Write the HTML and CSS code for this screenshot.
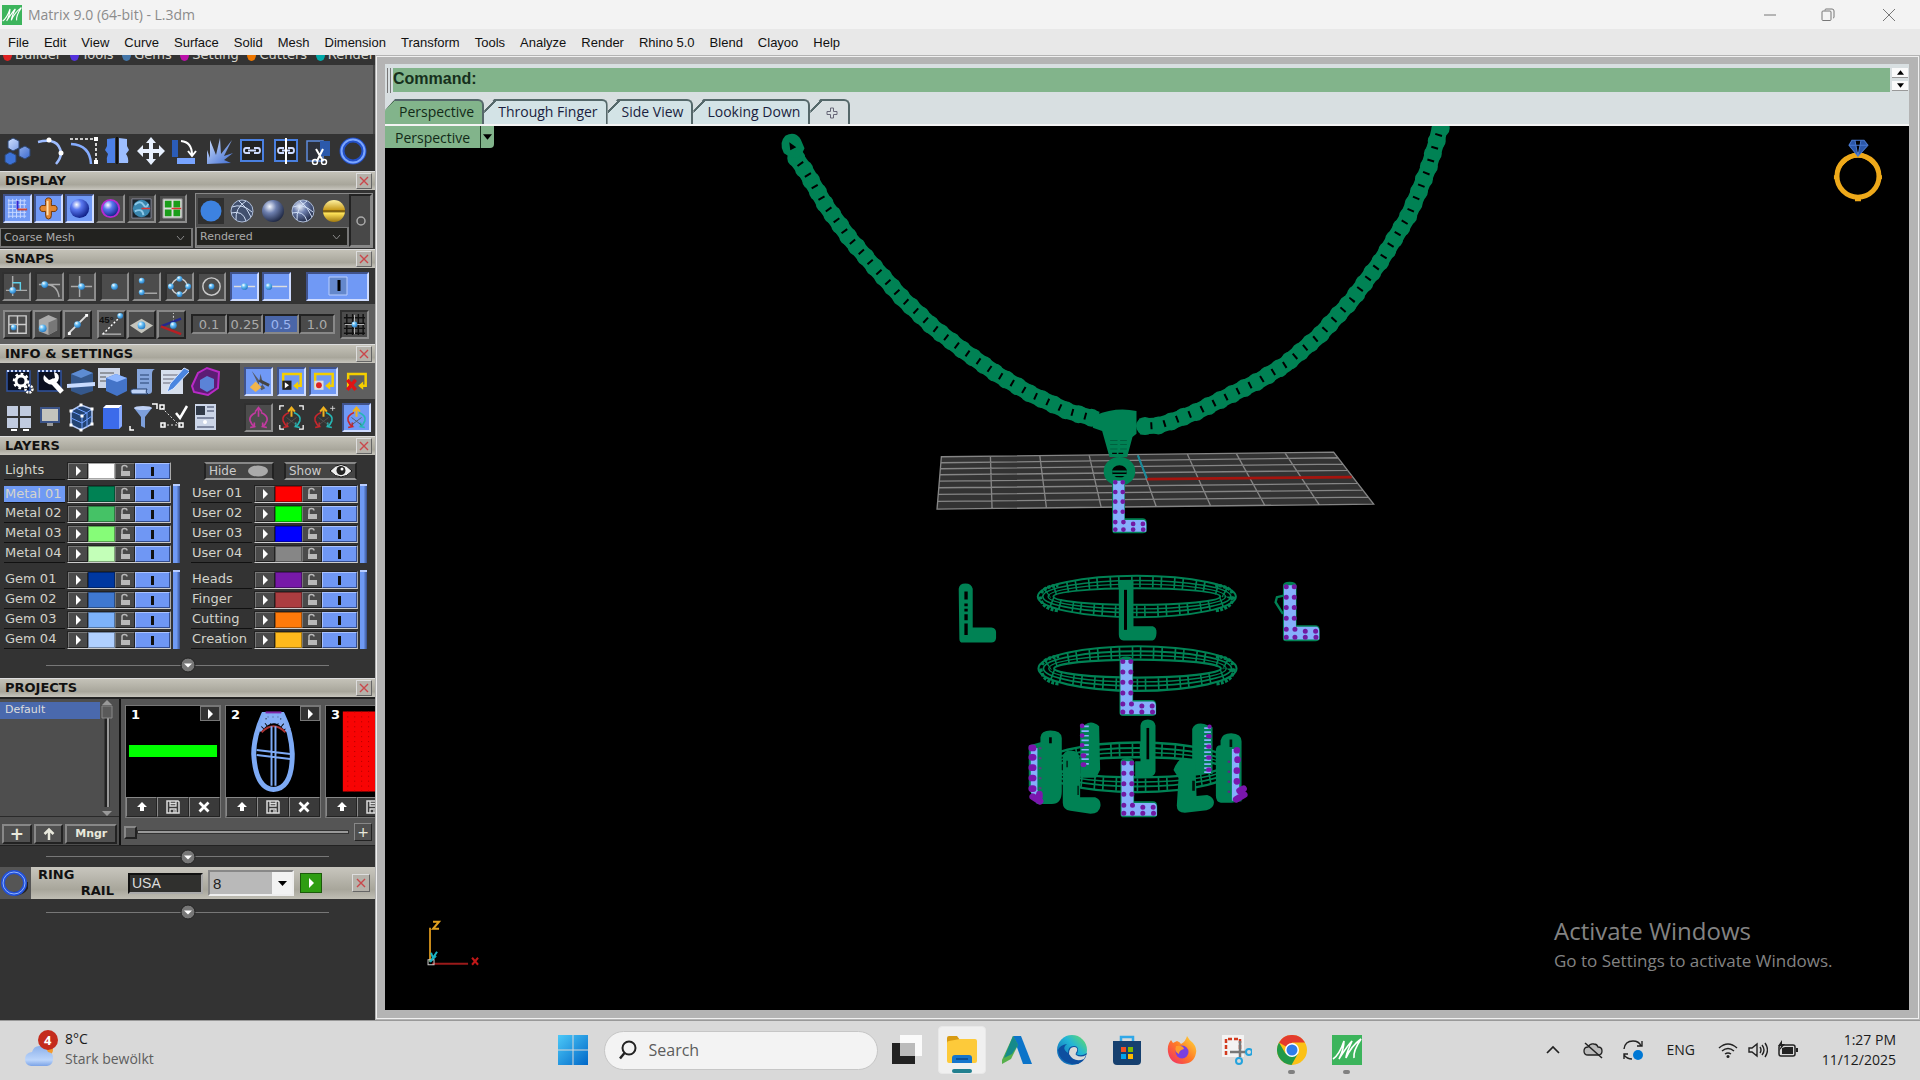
FILE: index.html
```html
<!DOCTYPE html>
<html lang="en">
<head>
<meta charset="utf-8">
<title>Matrix 9.0 (64-bit) - L.3dm</title>
<link rel="stylesheet" href="styles.css">
</head>
<body>
<svg class="defs" aria-hidden="true">
  <defs>
    <linearGradient id="blue" x1="0" y1="0" x2="1" y2="1"><stop offset="0" stop-color="#cfe0ff"/><stop offset="1" stop-color="#3c6ad0"/></linearGradient>
    <linearGradient id="win" x1="0" y1="0" x2="1" y2="1"><stop offset="0" stop-color="#4cc9f8"/><stop offset="1" stop-color="#0067c8"/></linearGradient>
    <linearGradient id="cloud" x1="0" y1="0" x2="0" y2="1"><stop offset="0" stop-color="#8bb0ea"/><stop offset=".7" stop-color="#bdd6fb"/><stop offset="1" stop-color="#7ba3e6"/></linearGradient>
    <linearGradient id="edge" x1="1" y1="0" x2="0" y2="1"><stop offset="0" stop-color="#6ee05a"/><stop offset=".4" stop-color="#22b6d6"/><stop offset="1" stop-color="#0b55b0"/></linearGradient>
    <linearGradient id="fire" x1="1" y1="0" x2="0" y2="1"><stop offset="0" stop-color="#ffe23c"/><stop offset=".5" stop-color="#ff7a26"/><stop offset="1" stop-color="#f0246e"/></linearGradient>
    <linearGradient id="gold" x1="0" y1="0" x2="0" y2="1"><stop offset="0" stop-color="#fff2a0"/><stop offset=".45" stop-color="#c89a1a"/><stop offset=".5" stop-color="#5a3d00"/><stop offset=".6" stop-color="#ffe45a"/><stop offset="1" stop-color="#a07810"/></linearGradient>
    <radialGradient id="sph" cx=".35" cy=".3" r=".75"><stop offset="0" stop-color="#ffffff"/><stop offset=".35" stop-color="#5a78f0"/><stop offset="1" stop-color="#0a1a80"/></radialGradient>
    <radialGradient id="steel" cx=".35" cy=".3" r=".75"><stop offset="0" stop-color="#f4f8ff"/><stop offset=".4" stop-color="#6d7fae"/><stop offset="1" stop-color="#1c2540"/></radialGradient>
    <radialGradient id="dotg" cx=".35" cy=".3" r=".8"><stop offset="0" stop-color="#fff"/><stop offset=".4" stop-color="#62bdf5"/><stop offset="1" stop-color="#1c6cb8"/></radialGradient>
    <symbol id="x" viewBox="0 0 14 14"><path d="M3 3l8 8M11 3l-8 8" stroke="#c9474b" stroke-width="1.4"/></symbol>
    <symbol id="lock" viewBox="0 0 14 14"><path d="M4 7V3.500q0-2 2.500-2t2.500 2" fill="none" stroke="#b9b9b9" stroke-width="1.500"/><path d="M3 7h9v5H3z" fill="#b9b9b9"/></symbol>
    <symbol id="play" viewBox="0 0 14 14"><path d="M5 2l5 5-5 5z" fill="#fff"/></symbol>
    <symbol id="up" viewBox="0 0 14 14"><path d="M7 2l5 5H9v4H5V7H2z" fill="#fff"/></symbol>
    <symbol id="disk" viewBox="0 0 14 14"><path d="M1 1h11l1 1v11H1z" fill="none" stroke="#ddd" stroke-width="1.500"/><path d="M4 1v5h6V1M4 3.500h6M4 13V9h6v4M8 10v3" fill="none" stroke="#ddd" stroke-width="1.300"/></symbol>
    <symbol id="del" viewBox="0 0 14 14"><path d="M2.500 2.500l9 9M11.500 2.500l-9 9" stroke="#fff" stroke-width="2.800"/></symbol>
    <symbol id="m" viewBox="0 0 30 30"><path d="M0 0h30v30H0z" fill="#3cb45c"/><path d="M1 24C7 20 10 12 12 6c0 6-2 12-5 18 4-6 8-13 13-18-2 5-6 12-6 17 3-7 8-14 15-19-4 6-8 13-7 19" fill="none" stroke="#fff" stroke-width="1.600"/></symbol>
    <symbol id="chain" viewBox="0 0 30 30"><path d="M4 5h22v21H4z" fill="#222" stroke="#4a80e0" stroke-width="2"/><path d="M13 13H9q-2 0-2 2.500t2 2.500h4M17 13h4q2 0 2 2.500t-2 2.500h-4M11 15.500h8" fill="none" stroke="#cfdcff" stroke-width="1.800"/></symbol>
    <symbol id="arrows" viewBox="0 0 30 30"><path d="M15 14V5M11 8l4-5 4 5" fill="none" stroke="#f0b21e" stroke-width="2.400"/><path d="M12 9Q3 13 5 19q2 5 5 7l-5 1m5-1V21" fill="none" stroke="#c8262c" stroke-width="2"/><path d="M18 9q9 4 7 10-2 5-5 7l5 1m-5-1V21" fill="none" stroke="#25b7b5" stroke-width="2"/><path d="M9 15l12 9M21 15L9 24" stroke="#555" stroke-width="1"/></symbol>
    <symbol id="cmd" viewBox="0 0 30 30"><path d="M12 21H5V6h21v14h-5" fill="none" stroke="#f4ce00" stroke-width="3"/><path d="M23 15l-6 5 6 5z" fill="#f4ce00"/></symbol>
    <symbol id="term" viewBox="0 0 30 30"><path d="M3 5h23v20H3z" fill="#0b1020" stroke="#3153a0" stroke-width="1.500"/><path d="M3 5h23" stroke="#c8d8ff" stroke-width="2" stroke-dasharray="2 2"/></symbol>
    <symbol id="knob" viewBox="0 0 16 16"><circle cx="8" cy="8" r="7" fill="#777" stroke="#222"/><path d="M4 6.500h8L8 10.500z" fill="#fff"/></symbol>
    <g id="gem">
      <path d="M0 6Q0-6 20-6t21 12V124h56q12 0 13 12v28q-2 8-12 8H10Q0 172 0 162z" fill="#008254"/>
      <path d="M3 4h36v125h62q8 2 8 14v24H3z" fill="#86affc"/>
      <g stroke="#7119a3" stroke-width="15" stroke-linecap="round"><path d="M10 9h0M34 9h0M10 40h0M34 40h0M10 71h0M34 71h0M10 103h0M34 103h0M10 136h0M36 136h0M10 160h0M36 160h0M67 142h0M98 142h0M67 160h0M99 160h0"/></g>
    </g>
    <g id="plain"><path d="M0 16Q2 0 20 0t22 16v116h56q14 2 14 14v18q-2 13-14 13H12Q2 177 2 166z" fill="#008254"/><path d="M22 24v24M22 60v8m0 8v8m0 8v18M22 120v34" stroke="#000" stroke-width="10"/></g>
    <g id="ring" fill="none" stroke="#008254"><ellipse rx="297" ry="62" stroke-width="6"/><ellipse rx="250" ry="25" stroke-width="6"/><ellipse rx="282" ry="48" stroke-width="5"/><ellipse rx="266" ry="37" stroke-width="4"/><ellipse rx="274" ry="44" stroke-width="32" stroke-dasharray="5 20 5 34"/><path d="M-290 0Q-285 38-235 42M290 0Q285 38 235 42M-286-10Q-280-30-235-34M286-10Q280-30 235-34" stroke-width="10" stroke-dasharray="9 4"/></g>
  </defs>
</svg>

<header class="title">
  <svg class="s20"><use href="#m"/></svg>
  <span class="title-text">Matrix 9.0 (64-bit) - L.3dm</span>
  <button aria-label="Minimize"><svg class="s16" viewBox="0 0 16 16"><path d="M2 8h12" stroke="#777"/></svg></button>
  <button aria-label="Restore"><svg class="s16" viewBox="0 0 16 16"><path d="M5 3.500V3q0-1 1-1h6q2 0 2 2v6q0 1-1 1" fill="none" stroke="#777"/><rect x="2" y="4" width="9" height="9.500" rx="1" fill="none" stroke="#777"/></svg></button>
  <button aria-label="Close"><svg class="s16" viewBox="0 0 16 16"><path d="M2 2l12 12M14 2L2 14" stroke="#777"/></svg></button>
</header>
<nav class="menu">
  <a href="#">File</a><a href="#">Edit</a><a href="#">View</a><a href="#">Curve</a><a href="#">Surface</a><a href="#">Solid</a><a href="#">Mesh</a><a href="#">Dimension</a><a href="#">Transform</a><a href="#">Tools</a><a href="#">Analyze</a><a href="#">Render</a><a href="#">Rhino 5.0</a><a href="#">Blend</a><a href="#">Clayoo</a><a href="#">Help</a>
</nav>

<main class="work">
<aside class="side">
  <div class="cats"><span><i class="red"></i>Builder</span><span><i class="violet"></i>Tools</span><span><i class="sky"></i>Gems</span><span><i class="pink"></i>Setting</span><span><i class="orange"></i>Cutters</span><span><i class="teal"></i>Render</span></div>
  <div class="blank"></div>
  <div class="tools">
    <svg class="s30" viewBox="0 0 30 30"><g fill="url(#blue)" stroke="#2d4672"><path d="M7 6l5-3 6 3v7l-6 3-5-3zM18 14l6-3 5 3v7l-5 3-6-3z"/><path d="M4 20l5-3 6 3v7l-6 3-5-3z" fill="#3d73d8"/></g></svg>
    <svg class="s30" viewBox="0 0 30 30"><path d="M3 7Q24 2 26 18q0 5-5 11" fill="none" stroke="#9dbcff" stroke-width="2.500"/><path d="M14 5h0M26 18h0" stroke="#fff" stroke-width="5" stroke-linecap="round"/></svg>
    <svg class="s30" viewBox="0 0 30 30"><path d="M2 4h26v24" fill="none" stroke="#fff" stroke-width="1.600" stroke-dasharray="3 2"/><path d="M28 4h0M28 27h0" stroke="#fff" stroke-width="4" stroke-linecap="square"/><path d="M3 9Q22 10 23 29" fill="none" stroke="#86adff" stroke-width="2.500"/></svg>
    <svg class="s30" viewBox="0 0 30 30"><path d="M13 3v25H5q-1-5 1-9l-3-4 2-4V4z" fill="#4c80e8"/><path d="M17 3v25h9q1-5-2-9l3-4-2-4V4z" fill="#9dbeff"/><path d="M15 2v27" stroke="#111" stroke-width="2"/></svg>
    <svg class="s30" viewBox="0 0 30 30"><path d="M15 2l5 6h-3v6h6v-4l6 6-6 6v-4h-6v6h3l-5 6-5-6h3v-6H7v4l-6-6 6-6v4h6V8h-3z" fill="#e8f1ff"/></svg>
    <svg class="s30" viewBox="0 0 30 30"><path d="M3 5h6v17H3z" fill="#2b5cb8"/><path d="M8 23h18v6H8z" fill="#78a4ff"/><path d="M12 6q11 1 11 14m-4-4l4 5 4-5" fill="none" stroke="#fff" stroke-width="2"/></svg>
    <svg class="s30" viewBox="0 0 30 30"><path d="M4 29L4 15l3 8 0-18 6 15 4-17 1 16L29 5l-8 16 9-3-9 7 7 3z" fill="url(#blue)"/></svg>
    <svg class="s30"><use href="#chain"/></svg>
    <svg class="s30" viewBox="0 0 30 30"><use href="#chain"/><path d="M15 3v26" stroke="#fff" stroke-width="2"/></svg>
    <svg class="s30" viewBox="0 0 30 30"><path d="M3 6h16v20H3z" fill="#2c303a" stroke="#5d8bdc" stroke-width="1.500"/><path d="M16 6h10v15H16z" fill="#2b59ab"/><path d="M12 14l7 12M19 14l-6 12" stroke="#fff" stroke-width="2"/><circle cx="11" cy="27" r="2.500" fill="none" stroke="#fff" stroke-width="1.500"/><circle cx="20" cy="27" r="2.500" fill="none" stroke="#fff" stroke-width="1.500"/></svg>
    <svg class="s30" viewBox="0 0 30 30"><circle cx="15" cy="16" r="11" fill="none" stroke="#2350c8" stroke-width="5"/><circle cx="15" cy="16" r="11.500" fill="none" stroke="#7ba6ff" stroke-width="2"/></svg>
  </div>

  <h2 class="head">DISPLAY<button aria-label="Close display"><svg class="s14"><use href="#x"/></svg></button></h2>
  <section class="display">
    <div class="disp-left">
      <div class="disp-btns">
        <button class="t on" aria-label="Grid"><svg class="s26" viewBox="0 0 26 26"><path d="M4 3v20M8 3v20M12 3v20M16 3v20M20 3v20M3 5h19M3 9h19M3 13h19M3 17h19M3 21h19" stroke="#c9d9ff"/><path d="M13 5v9" stroke="#32c" stroke-width="2"/><path d="M13 14h10" stroke="#c43" stroke-width="2"/></svg></button>
        <button class="t on" aria-label="Gumball"><svg class="s26" viewBox="0 0 26 26"><path d="M13 2q4 0 3 5v3q6-1 6 3t-6 3v4q0 4-3 4t-3-4v-4q-6 1-6-3t6-3V7q-1-5 3-5z" fill="#e18732" stroke="#6d3405"/><path d="M12 5v15" stroke="#ffe0b0" stroke-width="2"/></svg></button>
        <button class="t on" aria-label="Shade"><svg class="s26" viewBox="0 0 26 26"><circle cx="13" cy="13" r="10" fill="url(#sph)"/></svg></button>
        <button class="t" aria-label="Outline"><svg class="s26" viewBox="0 0 26 26"><circle cx="13" cy="13" r="9" fill="url(#sph)" stroke="#b62bd0" stroke-width="2"/></svg></button>
        <button class="t" aria-label="Environment"><svg class="s26" viewBox="0 0 26 26"><path d="M3 3h20v20H3z" fill="#1b242c" stroke="#889"/><circle cx="13" cy="13" r="9" fill="#3a87b0"/><path d="M6 9q6-5 9 0t5-1M6 16q8-4 9 4" fill="none" stroke="#8cc8e8" stroke-width="2"/><path d="M13 13h9" stroke="#d33" stroke-width="1.500"/></svg></button>
        <button class="t" aria-label="Viewports"><svg class="s26" viewBox="0 0 26 26"><path d="M3 3h20v20H3z" fill="#ddd" stroke="#888"/><path d="M5 5h7v7H5zM14 5h7v7h-7zM5 14h7v7H5zM14 14h7v7h-7z" fill="#1a9e1a"/><path d="M12 13h10" stroke="#d33" stroke-width="1.500"/></svg></button>
      </div>
      <select class="drop" aria-label="Mesh quality"><option>Coarse Mesh</option></select>
    </div>
    <div class="disp-right">
      <div class="modes">
        <div class="spheres">
          <svg class="s26" viewBox="0 0 26 26"><circle cx="13" cy="13" r="10.500" fill="#3d82e0"/></svg>
          <svg class="s26" viewBox="0 0 26 26"><circle cx="13" cy="13" r="11" fill="#41506e" stroke="#aebdd8"/><path d="M3 9q10-4 20 5M7 22Q6 10 17 3M2 15q12-3 15 8M10 3q8 6 12 16" fill="none" stroke="#d0def5"/></svg>
          <svg class="s26" viewBox="0 0 26 26"><circle cx="13" cy="13" r="11" fill="url(#steel)"/></svg>
          <svg class="s26" viewBox="0 0 26 26"><circle cx="13" cy="13" r="11" fill="url(#steel)" stroke="#aebdd8"/><path d="M3 9q10-4 20 5M7 22Q6 10 17 3M2 15q12-3 15 8M10 3q8 6 12 16" fill="none" stroke="#d0def5"/></svg>
          <svg class="s26" viewBox="0 0 26 26"><circle cx="13" cy="13" r="11" fill="url(#gold)"/></svg>
        </div>
        <select class="drop" aria-label="Display mode"><option>Rendered</option></select>
      </div>
      <button class="side-btn" aria-label="Options"><svg class="s14" viewBox="0 0 14 14"><circle cx="7" cy="7" r="4" fill="none" stroke="#aaa" stroke-width="1.500"/></svg></button>
    </div>
  </section>

  <h2 class="head">SNAPS<button aria-label="Close snaps"><svg class="s14"><use href="#x"/></svg></button></h2>
  <section class="snaps1">
    <div class="snap-row">
      <button class="t" aria-label="Perp"><svg class="s26" viewBox="0 0 26 26"><path d="M9 2v21M2 17h22" stroke="#aaa" stroke-width="1.500"/><path d="M9 9h8v8" fill="none" stroke="#5fd0e8" stroke-width="1.500"/><circle cx="9" cy="17" r="3.500" fill="url(#dotg)"/></svg></button>
      <button class="t" aria-label="Tan"><svg class="s26" viewBox="0 0 26 26"><path d="M2 11h22M9 11q12 0 14 13" fill="none" stroke="#aaa" stroke-width="1.500"/><circle cx="8" cy="11" r="3.500" fill="url(#dotg)"/></svg></button>
      <button class="t" aria-label="Intersection"><svg class="s26" viewBox="0 0 26 26"><path d="M11 2v22M2 13h22" stroke="#aaa" stroke-width="1.500"/><circle cx="13" cy="13" r="3.500" fill="url(#dotg)"/></svg></button>
      <button class="t" aria-label="Point"><svg class="s26" viewBox="0 0 26 26"><circle cx="13" cy="13" r="3.500" fill="url(#dotg)"/></svg></button>
      <button class="t" aria-label="Project"><svg class="s26" viewBox="0 0 26 26"><path d="M8 20h16" stroke="#aaa" stroke-width="1.500"/><circle cx="8" cy="7" r="3" fill="url(#dotg)"/><circle cx="8" cy="19" r="3" fill="url(#dotg)"/></svg></button>
      <button class="t" aria-label="Quad"><svg class="s26" viewBox="0 0 26 26"><circle cx="13" cy="13" r="8" fill="none" stroke="#ccc" stroke-width="1.500"/><g fill="url(#dotg)"><circle cx="13" cy="5" r="3"/><circle cx="13" cy="21" r="3"/><circle cx="4" cy="13" r="3"/><circle cx="22" cy="13" r="3"/></g></svg></button>
      <button class="t" aria-label="Center"><svg class="s26" viewBox="0 0 26 26"><circle cx="13" cy="13" r="9" fill="none" stroke="#ccc" stroke-width="1.500"/><circle cx="13" cy="13" r="3" fill="url(#dotg)"/></svg></button>
      <button class="t on" aria-label="Mid"><svg class="s26" viewBox="0 0 26 26"><path d="M2 13h22" stroke="#ddd" stroke-width="1.500"/><circle cx="13" cy="13" r="3.500" fill="url(#dotg)"/></svg></button>
      <button class="t on" aria-label="End"><svg class="s26" viewBox="0 0 26 26"><path d="M5 13h19" stroke="#ddd" stroke-width="1.500"/><circle cx="5" cy="13" r="3.500" fill="url(#dotg)"/></svg></button>
    </div>
    <button class="t on wide" aria-label="Snaps on"><svg class="s20" viewBox="0 0 20 20"><path d="M1 1h18v18H1z" fill="#6488cc" stroke="#b9ceff"/><path d="M11 4v11" stroke="#000" stroke-width="3"/></svg></button>
  </section>
  <section class="snaps2">
    <div class="trio">
      <button class="t" aria-label="Grid snap"><svg class="s26" viewBox="0 0 26 26"><path d="M4 4h18v18H4zM13 4v18M4 13h18" fill="none" stroke="#ccc" stroke-width="1.500"/><circle cx="9" cy="16" r="3" fill="url(#dotg)"/></svg></button>
      <button class="t" aria-label="Surface snap"><svg class="s26" viewBox="0 0 26 26"><path d="M4 8l10-5 9 4v12l-9 5-10-4z" fill="#aaa"/><path d="M14 11v13l9-5V7z" fill="#777"/><circle cx="8" cy="17" r="4" fill="url(#dotg)"/></svg></button>
      <button class="t" aria-label="Curve snap"><svg class="s26" viewBox="0 0 26 26"><path d="M4 22L22 4" stroke="#ddd" stroke-width="2"/><path d="M3 21h3v3H3zM21 2h3v3h-3z" fill="#fff"/><circle cx="13" cy="13" r="3.500" fill="url(#dotg)"/></svg></button>
    </div>
    <div class="trio">
      <button class="t" aria-label="45 degrees"><svg class="s26" viewBox="0 0 26 26"><text x="0" y="11" class="tiny">45°</text><path d="M4 23L21 6" stroke="#fff" stroke-width="1.500" stroke-dasharray="2 2"/><path d="M3 23h20" stroke="#ddd"/><circle cx="22" cy="4" r="3" fill="url(#dotg)"/></svg></button>
      <button class="t" aria-label="Planar"><svg class="s26" viewBox="0 0 26 26"><path d="M1 14l12-7 12 7-12 8z" fill="#c5c5bd"/><circle cx="13" cy="14" r="4" fill="url(#dotg)"/></svg></button>
      <button class="t" aria-label="Axis"><svg class="s26" viewBox="0 0 26 26"><path d="M15 14V1" stroke="#ddd" stroke-dasharray="2 2"/><path d="M2 15L23 7" stroke="#22288f" stroke-width="2.500"/><path d="M2 15l21 8" stroke="#b71f24" stroke-width="2.500"/><circle cx="15" cy="14" r="3.500" fill="url(#dotg)"/></svg></button>
    </div>
    <div class="nums"><button>0.1</button><button>0.25</button><button class="sel">0.5</button><button>1.0</button></div>
    <button class="t" aria-label="Snap to grid"><svg class="s26" viewBox="0 0 26 26"><path d="M5 2v22M11 2v22M17 2v22M22 2v22M2 6h22M2 12h22M2 17h22M2 22h22" stroke="#111" stroke-width="1.500"/><path d="M13 3v20M3 13h20" stroke="#bbb"/><circle cx="13" cy="13" r="3" fill="url(#dotg)"/></svg></button>
  </section>

  <h2 class="head">INFO &amp; SETTINGS<button aria-label="Close info"><svg class="s14"><use href="#x"/></svg></button></h2>
  <section class="info">
    <div class="info-l">
      <svg class="s30" viewBox="0 0 30 30"><use href="#term"/><circle cx="17" cy="15" r="5" fill="none" stroke="#fff" stroke-width="3"/><circle cx="17" cy="15" r="7" fill="none" stroke="#fff" stroke-width="2.500" stroke-dasharray="2.700 2.700"/><circle cx="25" cy="23" r="3.500" fill="none" stroke="#fff" stroke-width="2.500" stroke-dasharray="2 1"/></svg>
      <svg class="s30" viewBox="0 0 30 30"><use href="#term"/><path d="M16 14l11 12" stroke="#fff" stroke-width="5"/><path d="M9 9l5 5 6-2-1-6q7 2 4 9-6 6-11 2-5-2-3-8z" fill="#fff"/></svg>
      <svg class="s30" viewBox="0 0 30 30"><path d="M5 8l12-5 10 4v18l-12 4-10-4z" fill="#35588c"/><path d="M5 8l12-5 10 4-12 5z" fill="#5d8cd3"/><path d="M1 18l28-2v4L1 22z" fill="#c9dcff"/></svg>
      <svg class="s30" viewBox="0 0 30 30"><path d="M1 2h22v20H1z" fill="#cdd6e8"/><path d="M3 7h14M3 11h6M3 15h6" stroke="#555"/><path d="M9 12l10-4 11 4v13l-10 5-11-5z" fill="#4474c8"/><path d="M9 12l10-4 11 4-10 4z" fill="#8fb7ff"/></svg>
      <svg class="s30" viewBox="0 0 30 30"><path d="M9 3h18q-3 1-3 5v17q0 3-4 3H6q3-1 3-4z" fill="#86a6dd"/><path d="M4 28q-3-4 1-5h14q-2 4 1 5zM12 9h9M12 13h9M12 17h9" fill="#bed3f8" stroke="#24406f"/></svg>
      <svg class="s30" viewBox="0 0 30 30"><path d="M2 4h22v24H2z" fill="#d6deec"/><path d="M4 9h16M4 13h13M4 17h9" stroke="#667"/><path d="M25 2l6 3-17 18-6 3 3-8z" fill="#4b86e0" stroke="#dbe7ff"/></svg>
      <svg class="s30" viewBox="0 0 30 30"><path d="M2 20L8 7l9-5 12 4-1 16-10 7-14-3z" fill="#5c1d74" stroke="#b92ac6" stroke-width="2"/><path d="M10 14l7-4 7 3v9l-7 4-7-4z" fill="#5b83d7"/></svg>
    </div>
    <div class="info-r lite">
      <button class="t on" aria-label="Tools"><svg class="s26" viewBox="0 0 26 26"><path d="M6 2l14 18-4 2zM15 5l-2 14 5-3z" fill="#555a66"/><path d="M4 19l6-6 6 6-6 5z" fill="#f1b54c"/><path d="M14 12l10 5" stroke="#444" stroke-width="3"/></svg></button>
      <button class="t on" aria-label="Play history"><svg class="s26" viewBox="0 0 30 30"><use href="#cmd"/><path d="M4 14h11v11H4z" fill="#222"/><path d="M7 16l5 3.500-5 3.500z" fill="#fff"/></svg></button>
      <button class="t on" aria-label="Record history"><svg class="s26" viewBox="0 0 30 30"><use href="#cmd"/><path d="M4 14h11v11H4z" fill="#ddd"/><circle cx="9.500" cy="19.500" r="3.500" fill="#d22"/></svg></button>
      <button class="t flat" aria-label="Clear history"><svg class="s26" viewBox="0 0 30 30"><use href="#cmd"/><path d="M4 13l10 12M14 13L4 25" stroke="#e01414" stroke-width="4"/></svg></button>
    </div>
    <div class="info-l">
      <svg class="s30" viewBox="0 0 30 30"><path d="M3 4h11v10H3zM16 4h11v10H16zM3 16h11v10H3zM16 16h11v10H16z" fill="#c1cbdf"/><path d="M7 28h6M19 28h6" stroke="#fff" stroke-width="2"/></svg>
      <svg class="s30" viewBox="0 0 30 30"><path d="M6 6h18v14H6z" fill="#c4c4bd" stroke="#3c5488" stroke-width="2"/><path d="M12 21h6v3h-6z" fill="#999"/></svg>
      <svg class="s30" viewBox="0 0 30 30"><path d="M5 9l10-6 11 4v15l-11 6-10-5z" fill="#234373" stroke="#b8cdf8" stroke-width="1.500"/><path d="M5 9l11 5 10-7M16 14v14M10 6l11 5v14M5 16l11 5 10-7" fill="none" stroke="#6fa0ff"/><path d="M5 9h0M15 3h0M26 7h0M26 22h0M15 28h0M5 23h0M16 14h0" stroke="#fff" stroke-width="3" stroke-linecap="square"/></svg>
      <svg class="s30" viewBox="0 0 30 30"><path d="M6 6l3-3h16v21l-3 3H6z" fill="#3c6bea"/><path d="M6 6l3-3h16l-3 3z" fill="#fff"/><path d="M22 6l3-3v21l-3 3z" fill="#88aaff"/></svg>
      <svg class="s30" viewBox="0 0 30 30"><path d="M6 6h18l-7 9v11l-4-2v-9z" fill="#7d9fdb"/><ellipse cx="15" cy="6" rx="9" ry="2" fill="#bfd1f5"/><path d="M24 2h5v5M2 24v4h4" fill="none" stroke="#fff" stroke-width="1.500"/></svg>
      <svg class="s30" viewBox="0 0 30 30"><path d="M3 6l20 20M4 23h18" stroke="#ddd" stroke-dasharray="2 2"/><path d="M1 3h4v4H1zM2 21h4v4H2zM20 21h4v4h-4z" fill="none" stroke="#fff" stroke-width="1.500"/><path d="M17 11l4 5 7-12" fill="none" stroke="#fff" stroke-width="2.500"/></svg>
      <svg class="s30" viewBox="0 0 30 30"><path d="M5 2h21v26H5z" fill="#ccd6e8"/><path d="M6 4h9v9H6z" fill="#303947"/><path d="M17 5h7M17 9h7M7 16h17M7 25h17" stroke="#65708a" stroke-width="1.500"/><circle cx="15" cy="20" r="2" fill="#fff"/></svg>
    </div>
    <div class="info-r">
      <button class="t" aria-label="Orient"><svg class="s26" viewBox="0 0 30 30"><g class="magenta"><path d="M15 14V5M11 8l4-5 4 5M12 9Q3 13 5 19q2 5 5 7l-5 1m5-1V21M18 9q9 4 7 10-2 5-5 7l5 1m-5-1V21" fill="none" stroke-width="2"/></g></svg></button>
      <button class="t none" aria-label="Orient selection"><svg class="s26" viewBox="0 0 30 30"><use href="#arrows"/><path d="M1 6V1h5M24 1h5v5M1 24v5h5M24 29h5v-5" fill="none" stroke="#fff" stroke-width="1.500"/></svg></button>
      <button class="t none" aria-label="Orient add"><svg class="s26" viewBox="0 0 30 30"><use href="#arrows"/><path d="M26 1v6M23 4h6" stroke="#ddd"/></svg></button>
      <button class="t on" aria-label="Orient world"><svg class="s26" viewBox="0 0 30 30"><use href="#arrows"/></svg></button>
    </div>
  </section>

  <h2 class="head">LAYERS<button aria-label="Close layers"><svg class="s14"><use href="#x"/></svg></button></h2>
  <section class="layers">
    <div class="top-row">
      <div class="layer"><span class="name">Lights</span><div class="ctl"><button aria-label="Open"><svg class="s14"><use href="#play"/></svg></button><i class="sw" style="background:#fff"></i><button aria-label="Lock"><svg class="s14"><use href="#lock"/></svg></button><button class="tog" aria-label="On"></button></div></div>
      <button class="hs">Hide<svg class="eye" viewBox="0 0 22 14"><ellipse cx="11" cy="7" rx="10" ry="5.500" fill="#aaa"/></svg></button>
      <button class="hs">Show<svg class="eye" viewBox="0 0 22 14"><path d="M0 7q11-13 22 0-11 12-22 0z" fill="#eee" stroke="#111"/><circle cx="11" cy="6.500" r="4.500" fill="#222"/><circle cx="12" cy="5" r="1.500" fill="#fff"/></svg></button>
    </div>
    <div class="groups" id="groups"></div>
    <div class="pull"><svg class="s16"><use href="#knob"/></svg></div>
  </section>

  <h2 class="head">PROJECTS<button aria-label="Close projects"><svg class="s14"><use href="#x"/></svg></button></h2>
  <section class="projects">
    <div class="plist">
      <div class="plist-body"><div class="plist-items"><a href="#">Default</a></div><svg class="vbar" viewBox="0 0 14 118"><path d="M2 6l5-5 5 5z" fill="#999"/><path d="M7 8v100" stroke="#222" stroke-width="5"/><path d="M8 18v90" stroke="#999" stroke-width="2"/><path d="M2 7h10v12H2z" fill="#5a5a5a" stroke="#888"/><path d="M2 112h10l-5 5z" fill="#999"/></svg></div>
      <div class="plist-foot"><button class="b">+</button><button class="b" aria-label="Up"><svg class="s14" viewBox="0 0 14 14"><path d="M7 13V3M2.500 7L7 2.500 11.500 7" fill="none" stroke="#e8e8dc" stroke-width="2.500"/></svg></button><button class="b mngr">Mngr</button></div>
    </div>
    <div class="thumbs">
      <div class="strip">
        <div class="card"><div class="pic"><b>1</b><svg class="art" viewBox="0 0 95 90"><path d="M3 39h89v12H3z" fill="#0f0"/></svg><button aria-label="Load"><svg class="s14"><use href="#play"/></svg></button></div><div class="acts"><button aria-label="Up"><svg class="s14"><use href="#up"/></svg></button><button aria-label="Save"><svg class="s14"><use href="#disk"/></svg></button><button aria-label="Delete"><svg class="s14"><use href="#del"/></svg></button></div></div>
        <div class="card"><div class="pic"><b>2</b><svg class="art" viewBox="0 0 95 90"><path d="M38 8Q28 30 28 48q2 35 20 36 19-1 19-36Q66 26 57 8z" fill="none" stroke="#7daaf5" stroke-width="5"/><path d="M33 24q15-20 30 0M36 14h24M38 9h20" fill="none" stroke="#86aef5" stroke-width="6" stroke-dasharray="4 1"/><path d="M36 26q12-12 24 0" fill="none" stroke="#a33" stroke-width="2"/><path d="M46 20v60M50 20v60M31 44l34 4M31 49l34 4" stroke="#7daaf5" stroke-width="2"/><path d="M40 6h16" stroke="#8226a8" stroke-width="2"/></svg><button aria-label="Load"><svg class="s14"><use href="#play"/></svg></button></div><div class="acts"><button aria-label="Up"><svg class="s14"><use href="#up"/></svg></button><button aria-label="Save"><svg class="s14"><use href="#disk"/></svg></button><button aria-label="Delete"><svg class="s14"><use href="#del"/></svg></button></div></div>
        <div class="card"><div class="pic"><b>3</b><svg class="art" viewBox="0 0 95 90"><path d="M17 5h78v81H17z" fill="#f80404"/><path d="M22 5v81M29 5v81M36 5v81M43 5v81M50 5v81" stroke="#a00" stroke-dasharray="1 4"/></svg></div><div class="acts"><button aria-label="Up"><svg class="s14"><use href="#up"/></svg></button><button aria-label="Save"><svg class="s14"><use href="#disk"/></svg></button><button aria-label="Delete"><svg class="s14"><use href="#del"/></svg></button></div></div>
      </div>
      <div class="hbar"><i></i><span></span><button class="b">+</button></div>
    </div>
  </section>
  <div class="pull"><svg class="s16"><use href="#knob"/></svg></div>

  <section class="rail">
    <div class="rail-ic"><svg class="s28" viewBox="0 0 28 28"><path d="M13 25Q28 24 27 13" fill="none" stroke="#222" stroke-width="4"/><circle cx="14" cy="14" r="11" fill="none" stroke="#2250d8" stroke-width="4"/><circle cx="14" cy="14" r="11" fill="none" stroke="#8fb4ff" stroke-width="1"/></svg></div>
    <h2 class="rail-name"><span>RING</span><span class="second">RAIL</span></h2>
    <input class="usa" aria-label="Standard" value="USA">
    <select class="size" aria-label="Ring size"><option>8</option></select>
    <button class="go" aria-label="Run"><svg class="s14"><use href="#play"/></svg></button>
    <button class="rail-x" aria-label="Close ring rail"><svg class="s14"><use href="#x"/></svg></button>
  </section>
  <div class="pull last"><svg class="s16"><use href="#knob"/></svg></div>
</aside>

<section class="frame">
  <div class="cmd"><span class="grip"></span><label class="cmd-line"><span>Command:</span><input aria-label="Command"></label><div class="spin"><button aria-label="Scroll up"><svg class="tri" viewBox="0 0 8 5"><path d="M0 5l4-5 4 5z"/></svg></button><button aria-label="Scroll down"><svg class="tri" viewBox="0 0 8 5"><path d="M0 0h8L4 5z"/></svg></button></div></div>
  <div class="tabs">
    <button class="tab cur"><span>Perspective</span></button><button class="tab"><span>Through Finger</span></button><button class="tab"><span>Side View</span></button><button class="tab"><span>Looking Down</span></button><button class="tab add" aria-label="New tab"><span><svg class="s14" viewBox="0 0 14 14"><path d="M5.500 2h3v3.500H12v3H8.500V12h-3V8.500H2v-3h3.500z" fill="none" stroke="#667"/></svg></span></button>
  </div>
  <div class="view">
    <svg class="scene" viewBox="386 126 1523 883" preserveAspectRatio="xMidYMid meet">
      <g transform="translate(920 390) scale(.3333333)">
        <path d="M66 199L1242 185 1362 341 53 356z" fill="#333"/>
        <path d="M66 199L1242 185 1362 341 53 356zM213 197L218 354M361 195L381 352M509 194L545 350M655 192L710 348M803 190L873 346M950 189L1036 345M1096 187L1199 343M65 217L1256 202M63 235L1270 221M61 253L1282 240M60 272L1296 260M58 292L1312 279M56 312L1328 299M55 333L1345 320" fill="none" stroke="#858585" stroke-width="4"/>
        <path d="M683 266L1296 260" stroke="#a5140e" stroke-width="8"/><path d="M655 195L682 264" stroke="#168a9a" stroke-width="6"/>
      </g>
      <g class="chain"><path class="w1" d="M797 158L807 172 827 206 851 239 878 270 904 299 934 327 965 351 998 374 1032 394 1069 411 1098 419"/><path class="w2" d="M797 158L807 172 827 206 851 239 878 270 904 299 934 327 965 351 998 374 1032 394 1069 411 1098 419"/><path class="w3" d="M797 158L807 172 827 206 851 239 878 270 904 299 934 327 965 351 998 374 1032 394 1069 411 1098 419"/>
      <path class="w1" d="M1441 124L1437 141 1429 167 1419 192 1408 217 1381 261 1352 300 1320 335 1286 364 1260 380 1232 394 1198 411 1172 421 1159 425 1140 426"/><path class="w2" d="M1441 128L1437 141 1429 167 1419 192 1408 217 1381 261 1352 300 1320 335 1286 364 1260 380 1232 394 1198 411 1172 421 1159 425 1140 426"/><path class="w3" d="M1441 128L1437 141 1429 167 1419 192 1408 217 1381 261 1352 300 1320 335 1286 364 1260 380 1232 394 1198 411 1172 421 1159 425 1140 426"/></g>
      <path d="M787 151q-4-8 1-13 7-4 11 3l3 7q-3 8-10 6z" fill="#008254" stroke="#008254" stroke-width="6"/><path d="M790 142l7 5-6 3z" fill="#000"/>
      <g transform="translate(920 390) scale(.3333333)">
        <path d="M527 75Q590 48 651 62v68l-12 10-16 60H570L548 122 520 112z" fill="#008254"/>
        <ellipse cx="600" cy="243" rx="35" ry="31" fill="#000" stroke="#008254" stroke-width="25"/><path d="M578 243h44M580 254h40" stroke="#008254" stroke-width="6"/><path d="M572 150h50M572 162h50M572 176h50" stroke="#00613f" stroke-width="3" stroke-dasharray="22 8"/><path d="M578 189h34" stroke="#000" stroke-width="4" stroke-dasharray="14 5"/>
        <use href="#gem" transform="translate(578 267) scale(.94)"/>
      </g>
      <g transform="translate(920 560) scale(.3333333)">
        <use href="#plain" x="118" y="69"/>
        <use href="#ring" transform="translate(652 108)"/><path d="M598 60h44v137h58q12 4 11 20-1 20-12 23H612q-14-2-14-18z" fill="#008254"/><path d="M618 88v120" stroke="#000" stroke-width="9"/>
        <path d="M1092 105l-20 5-4 15 22 35" fill="none" stroke="#008254" stroke-width="7"/><use href="#gem" x="1090" y="70"/>
        <use href="#ring" transform="translate(654 324) scale(1 1.080)"/><use href="#gem" x="600" y="294"/>
        <use href="#ring" transform="translate(654 620) scale(1 1.200)"/>
        <path d="M663 495q2-18 22-18t23 18v138q-3 14-18 14h-43v-45h16z" fill="#008254"/><path d="M685 502v94" stroke="#000" stroke-width="8"/>
        <path d="M363 530q2-20 30-20 32 0 34 22v154q2 44-30 44H352l-24-45V555l35-10z" fill="#008254"/><path d="M393 530v18" stroke="#000" stroke-width="8"/>
        <path d="M344 562V690l12 26" fill="none" stroke="#86affc" stroke-width="20"/><path d="M337 562h4M337 590h4M337 621h4M337 652h4M337 684h4M340 708l22 14M360 700v8" stroke="#7a16ad" stroke-width="20" stroke-linecap="round"/><path d="M362 560v150" stroke="#5a3a80" stroke-width="8" stroke-dasharray="6 24"/>
        <path d="M497 492q20-14 42 5l3 130-12 24h-48V500z" fill="#008254"/><path d="M497 495v125" stroke="#86affc" stroke-width="22" stroke-dasharray="5 9"/><path d="M488 496h0M488 525h0M488 554h0M490 585h4M490 612h4" stroke="#7a16ad" stroke-width="14" stroke-linecap="round"/>
        <path d="M430 600q-4-30 25-30 26 0 27 30v110h45q18 6 16 26-3 23-30 23l-60-9q-23-3-23-24z" fill="#008254"/><path d="M443 600v20M476 675v28" stroke="#002b1c" stroke-width="5"/>
        <path d="M818 505q8-20 36-15l25 10v140h-50q-13 0-11-20z" fill="#008254"/><path d="M864 500v140" stroke="#86affc" stroke-width="20" stroke-dasharray="5 7"/><path d="M870 498h0M866 527h4M866 558h4M866 591h4M866 627h4" stroke="#7a16ad" stroke-width="13" stroke-linecap="round"/>
        <path d="M762 628q4-15 20-32h45l4 110 32-3q22 8 20 24 0 15-22 22l-65 7q-26 0-24-24l5-80z" fill="#008254"/>
        <path d="M903 540q4-22 32-22 31 2 31 24v180l-30 4h-32q-16-2-15-24V570q0-16 14-16z" fill="#008254"/><path d="M934 537v22M822 660v30" stroke="#00150d" stroke-width="8"/>
        <path d="M948 565V720" stroke="#86affc" stroke-width="22"/><path d="M952 569h0M954 597h0M952 630h0M952 662h0M960 690l12-6M950 716l24-14" stroke="#7a16ad" stroke-width="20" stroke-linecap="round"/><path d="M928 600v110" stroke="#5a2a88" stroke-width="7" stroke-dasharray="6 24"/>
        <use href="#gem" x="603" y="598"/>
      </g>
      <g fill="none" stroke="#eea91a"><circle cx="1858" cy="176" r="21" stroke-width="5"/><path d="M1836 172q22-32 44 0M1838 167q20-28 40 0" stroke-width="2"/><path d="M1855 199h6M1834 177h3M1879 177h3" stroke-width="4"/></g>
      <path d="M1852 140h12l4 5-10 11-9-11zM1849 145h18M1855 140l3 16 3-16" fill="#2a56a8" stroke="#4a7ad0"/>
      <path d="M431 927v34" stroke="#c88a1a" stroke-width="2"/><path d="M433 963h36" stroke="#9a1a1a" stroke-width="2"/><path d="M431 961l6-6" stroke="#19a5b5" stroke-width="2"/><path d="M429 959h6v5h-6z" fill="none" stroke="#ccc"/>
      <path d="M434 921h6l-6 7h6" fill="none" stroke="#e0a020" stroke-width="2"/><path d="M473 957l6 7M479 957l-6 7" stroke="#c01818" stroke-width="2"/><path d="M432 952l2 5 4-6M434 957l-3 4" fill="none" stroke="#19b5c5" stroke-width="2"/>
    </svg>
    <div class="tag"><button>Perspective</button><button class="dd" aria-label="Viewport menu"><svg class="tri big" viewBox="0 0 8 5"><path d="M0 0h8L4 5z"/></svg></button></div>
    <div class="activate"><p class="a1">Activate Windows</p><p class="a2">Go to Settings to activate Windows.</p></div>
  </div>
</section>
</main>

<footer class="bar">
  <div class="weather"><svg class="wic" viewBox="0 0 34 38"><circle cx="24" cy="20" r="5" fill="#f39a2d"/><path d="M7 36q-6-1-6-7t7-7q2-7 9-6 5 1 7 6 6 1 5 7 0 6-6 7z" fill="url(#cloud)"/><circle cx="24" cy="10" r="10" fill="#c42b1c"/><text x="20" y="15" class="badge">4</text></svg><div><p>8°C</p><p class="dim">Stark bewölkt</p></div></div>
  <div class="apps">
    <button aria-label="Start"><svg class="s30" viewBox="0 0 30 30"><path d="M0 0h14.500v14.500H0zM15.500 0H30v14.500H15.500zM0 15.500h14.500V30H0zM15.500 15.500H30V30H15.500z" fill="url(#win)"/></svg></button>
    <label class="search"><svg class="s20" viewBox="0 0 20 20"><circle cx="11" cy="8" r="6.500" fill="none" stroke="#222" stroke-width="2"/><path d="M6.500 13L2 18.500" stroke="#222" stroke-width="2.500"/></svg><input type="text" placeholder="Search" aria-label="Search"></label>
    <button class="app tv" aria-label="Task view"><svg class="s30" viewBox="0 0 30 30"><path d="M0 8h23v21H0z" fill="#222"/><path d="M8 0h22v21H8z" fill="#fff" opacity=".85"/><path d="M8 8h15v13H8z" fill="#bbb"/></svg></button>
    <button class="app active" aria-label="Explorer"><svg class="s30" viewBox="0 0 30 30"><path d="M0 3q0-2 2-2h8l3 4-3 4H0z" fill="#d89b13"/><path d="M0 8q0-2 2-2l11-2h15q2 0 2 2v20q0 2-2 2H2q-2 0-2-2z" fill="#fdca3a"/><path d="M5 28v-5q0-3 3-3h14q3 0 3 3v5z" fill="#1676cc"/><path d="M9 24h12" stroke="#0a519a" stroke-width="2"/></svg></button>
    <button class="app" aria-label="Autodesk"><svg class="s30" viewBox="0 0 30 30"><path d="M11 1h8l11 28h-9z" fill="#0b74c9"/><path d="M11 1l5 9-7 14-9 5V25z" fill="#57b04b"/><path d="M11 1l-9 22 8-4 6-9z" fill="#158a8a"/></svg></button>
    <button class="app" aria-label="Edge"><svg class="s30" viewBox="0 0 30 30"><circle cx="15" cy="15" r="15" fill="url(#edge)"/><path d="M11 18q0-7 6-7 4 0 4 4 0 3-2 4 5 3 11-1-3 13-16 11-12-3-13-14 2-5 9-6-6 4 1 9z" fill="#0d4fa0"/><path d="M12 19q0-7 5-7 4 0 3 4-2 3-1 4 5 3 10 0l-2 4q-10 4-15-5z" fill="#d9d9d9"/></svg></button>
    <button class="app" aria-label="Store"><svg class="s30" viewBox="0 0 30 30"><path d="M9 7V2h12v5" fill="none" stroke="#31a8e8" stroke-width="2.500"/><path d="M1 6h28v20q0 4-4 4H5q-4 0-4-4z" fill="#16406f"/><path d="M9 12h5v5H9z" fill="#f25022"/><path d="M16 12h5v5h-5z" fill="#7fba00"/><path d="M9 19h5v5H9z" fill="#00a4ef"/><path d="M16 19h5v5h-5z" fill="#ffb900"/></svg></button>
    <button class="app" aria-label="Firefox"><svg class="s30" viewBox="0 0 30 30"><path d="M20 1q2 4 6 7 4 5 3 10-2 11-14 11T1 17Q0 10 4 5l2 3 4-2q3 1 4 3 5-3 6-8z" fill="url(#fire)"/><circle cx="15" cy="17" r="6.500" fill="#7a3fe0"/><path d="M9 11q7-1 8 3-5 1-5 5-5-2-3-8z" fill="#ff9a2b"/></svg></button>
    <button class="app" aria-label="Snipping tool"><svg class="s30" viewBox="0 0 30 30"><path d="M0 0h22v22H0z" fill="#f3f3f3"/><path d="M4 20V4h14v10" fill="none" stroke="#d23a1e" stroke-width="2.500" stroke-dasharray="4 2"/><path d="M18 6v16M8 17h16" stroke="#777" stroke-width="2.500"/><circle cx="27" cy="17" r="3" fill="none" stroke="#25a3dd" stroke-width="2"/><circle cx="17" cy="26" r="3" fill="none" stroke="#25a3dd" stroke-width="2"/></svg></button>
    <button class="app run" aria-label="Chrome"><svg class="s30" viewBox="0 0 30 30"><circle cx="15" cy="15" r="15" fill="#fbc116"/><path d="M15 15L2 7.500A15 15 0 0 1 28 7.500H15z" fill="#e33b2e"/><path d="M2 7.500A15 15 0 0 0 14.500 30L21 18.500 15 15 8.500 18.500z" fill="#219a49"/><circle cx="15" cy="15" r="7" fill="#fff"/><circle cx="15" cy="15" r="5.500" fill="#2f7de9"/></svg></button>
    <button class="app run" aria-label="Matrix"><svg class="s30"><use href="#m"/></svg></button>
  </div>
  <div class="tray">
    <button aria-label="Hidden icons"><svg class="s20" viewBox="0 0 20 20"><path d="M4 13l6-6 6 6" fill="none" stroke="#222" stroke-width="1.700"/></svg></button>
    <button aria-label="Cloud sync off"><svg class="s20" viewBox="0 0 20 20"><path d="M5 15q-4 0-4-4t4-4q2-4 6-3 3 0 4 3 4 0 4 4t-4 4z" fill="#bbb" stroke="#222" stroke-width="1.300"/><path d="M2 3l17 15" stroke="#222" stroke-width="1.500"/></svg></button>
    <button aria-label="Update"><svg class="s20" viewBox="0 0 20 20"><path d="M1 9q1-8 9-8 6 0 8 5M19 1v5h-5M1 19v-5h4M1 15q3 4 8 4" fill="none" stroke="#222" stroke-width="1.400"/><circle cx="15" cy="15" r="5" fill="#0078d4"/></svg></button>
    <span class="lang">ENG</span>
    <button class="quick" aria-label="Network, sound and battery"><svg class="s20" viewBox="0 0 20 20"><path d="M1 8q9-8 18 0M4 11q6-5 12 0M7 14q3-2 6 0" fill="none" stroke="#222" stroke-width="1.500"/><circle cx="10" cy="16.500" r="1.500" fill="#222"/></svg><svg class="s20" viewBox="0 0 20 20"><path d="M1 8h3l5-4v12l-5-4H1zM12 7q2 3 0 6M14 5q4 5 0 10M17 3q5 7 0 14" fill="none" stroke="#222" stroke-width="1.400"/></svg><svg class="s20" viewBox="0 0 20 20"><rect x="1" y="5" width="16" height="11" rx="2" fill="none" stroke="#222" stroke-width="1.500"/><path d="M4 8l3-1h8v7H4zM18 8h2v4h-2z" fill="#222"/><path d="M4 0L0 6h3L1 11l6-7H4z" fill="#222"/></svg></button>
    <div class="clock"><p>1:27 PM</p><p>11/12/2025</p></div>
  </div>
</footer>
<script src="layers.js"></script>
</body>
</html>
```
FILE: layers.js
```js
const columns = [
  [['Metal 01', '#008254', true], ['Metal 02', '#45c266'], ['Metal 03', '#86fc78'], ['Metal 04', '#c3ffb8']],
  [['User 01', '#ff0000'], ['User 02', '#00ff00'], ['User 03', '#0000ff'], ['User 04', '#868686']],
  [['Gem 01', '#0038a0'], ['Gem 02', '#3f78d0'], ['Gem 03', '#7db2fa'], ['Gem 04', '#b0d0ff']],
  [['Heads', '#7719a8'], ['Finger', '#ab3d40'], ['Cutting', '#ff7a0a'], ['Creation', '#ffb91c']]
];
const row = ([name, color, current]) => `
  <div class="layer"><span class="name${current ? ' cur' : ''}">${name}</span><div class="ctl">
  <button aria-label="Open"><svg class="s14"><use href="#play"/></svg></button><i class="sw" style="background:${color}"></i><button aria-label="Lock"><svg class="s14"><use href="#lock"/></svg></button><button class="tog" aria-label="On"></button></div></div>`;
document.getElementById('groups').innerHTML = columns.map(rows =>
  `<div class="group"><div class="rows">${rows.map(row).join('')}</div><i class="strip-bar"></i></div>`).join('');
```
FILE: styles.css
```css
* { box-sizing: border-box; }
body { margin: 0; min-height: 100vh; display: flex; flex-direction: column; font-family: "Open Sans", sans-serif; background: #333; overflow: hidden; }
button { padding: 0; margin: 0; border: 0; background: none; font: inherit; color: inherit; display: flex; align-items: center; justify-content: center; }
p, h2 { margin: 0; }
a { color: inherit; text-decoration: none; }
svg { display: block; flex: none; }
.defs { position: absolute; width: 0; height: 0; }
.s14 { width: 14px; height: 14px; }
.s16 { width: 16px; height: 16px; }
.s20 { width: 20px; height: 20px; }
.s26 { width: 26px; height: 26px; }
.s28 { width: 28px; height: 28px; }
.s30 { width: 30px; height: 30px; }

.title { height: 29px; background: #f3f3f3; display: flex; align-items: center; padding-left: 2px; }
.title-text { flex: 1; padding-left: 6px; font-size: 14px; color: #8b8b8b; }
.title button { width: 58px; height: 28px; }
.title button:last-child { width: 63px; }
.menu { height: 26px; background: #e8e8e8; display: flex; align-items: center; gap: 15px; padding-left: 8px; font: 13px "Liberation Sans", sans-serif; color: #111; }

.work { flex: 1; display: flex; min-height: 0; }
.side { flex: none; width: 375px; background: #333; color: #ddd; font-family: "DejaVu Sans", sans-serif; overflow: hidden; }
.cats { height: 10px; overflow: hidden; display: flex; align-items: flex-end; justify-content: space-between; font-size: 13px; line-height: 16px; padding: 0 1px 2px 3px; white-space: nowrap; color: #d8d8d0; }
.cats span { display: flex; align-items: center; gap: 3px; }
.cats i { width: 9px; height: 12px; border-radius: 50%; }
.red { background: #d22; } .violet { background: #53d; } .sky { background: #47a; } .pink { background: #b1a; } .orange { background: #e70; } .teal { background: #0aa; }
.blank { height: 69px; background: #636363; border-right: 2px solid #444; }
.tools { height: 37px; display: flex; justify-content: space-between; align-items: flex-start; padding: 1px 7px 0 1px; }
.head { height: 19px; display: flex; align-items: center; justify-content: space-between; padding: 0 3px 0 5px; font-size: 13px; line-height: 18px; color: #111; background: linear-gradient(#c4c2b8, #a8a69b 70%, #c8c6be); border-top: 1px solid #ddd; }
.head button, .rail-x { width: 16px; height: 16px; background: #b5b2aa; border: 1px solid; border-color: #ddd #666 #666 #ddd; }

.t { width: 29px; height: 29px; background: #4c4c4c; border: 2px solid; border-color: #303030 #8d8d8d #8d8d8d #303030; }
.t.on { background: #7099f5; border-color: #40538c #cfdcff #cfdcff #40538c; }
.t.flat, .t.none { background: none; border-color: transparent; }
.t svg { width: 25px; height: 25px; }
.drop { appearance: none; display: block; width: 100%; height: 20px; margin: 0; padding: 0 3px; border: 2px solid #777; border-width: 1px 2px 2px 1px; border-radius: 0; color: #aaa; font: 11px "DejaVu Sans", sans-serif; background: #22221f url("data:image/svg+xml,%3Csvg xmlns='http://www.w3.org/2000/svg' width='9' height='6'%3E%3Cpath d='M1 1l3.500 4L8 1' fill='none' stroke='%23888'/%3E%3C/svg%3E") no-repeat right 6px center; }
.display { height: 59px; padding-top: 3px; display: flex; gap: 2px; }
.disp-left { width: 193px; display: flex; flex-direction: column; gap: 4px; }
.disp-btns { display: flex; gap: 2px; padding-left: 3px; height: 31px; align-items: center; }
.disp-right { width: 178px; height: 55px; border: 1px solid #888; display: flex; }
.modes { flex: 1; }
.spheres { height: 33px; display: flex; align-items: center; justify-content: space-between; padding: 0 2px; background: #4c4c4c; }
.spheres svg:first-child { background: #303030; }
.side-btn { width: 23px; background: #484848; border: 2px solid; border-color: #222 #888 #888 #222; }

.snaps1 { height: 36px; display: flex; align-items: center; justify-content: space-between; padding: 0 6px 0 2px; }
.snap-row { width: 289px; display: flex; justify-content: space-between; }
.wide { width: 63px; border-color: #cfdcff #40538c #40538c #cfdcff; }
.wide svg { width: 20px; height: 20px; }
.snaps2 { height: 40px; background: #5f5f5f; display: flex; align-items: center; padding: 0 0 0 3px; gap: 5px; }
.trio { display: flex; gap: 1px; }
.trio .t { border-color: #888 #222 #222 #888; }
.tiny { font: bold 10px "Liberation Sans", sans-serif; fill: #111; }
.nums { display: flex; }
.nums button { width: 36px; height: 20px; background: #4a4a4a; border: 2px solid; border-color: #222 #888 #888 #222; color: #aaa; font-size: 13px; }
.nums .sel { background: #4a66a8; color: #9db5f0; }

.info { display: grid; grid-template-columns: 1fr 135px; grid-auto-rows: 36px; height: 73px; }
.info-l { display: flex; align-items: center; gap: 1px; padding-left: 4px; }
.info-r { display: flex; align-items: center; justify-content: space-between; padding: 0 4px 0 4px; }
.lite { background: #5f5f5f; }
.magenta { stroke: #c23aa0; }

.layers { height: 223px; padding: 6px 0 0 4px; }
.top-row { display: flex; align-items: center; height: 20px; }
.layer { display: flex; height: 20px; width: 167px; align-items: center; gap: 2px; }
.name { width: 61px; height: 18px; padding-left: 1px; font-size: 13px; line-height: 15px; color: #d4d4cc; white-space: nowrap; border-bottom: 1px solid #111; }
.name.cur { background: #6f9af4; height: 17px; }
.ctl { display: flex; width: 104px; height: 18px; border: 1px solid; border-color: #222 #aaa #ccc #222; }
.ctl button { width: 20px; background: #4a4a4a; border: 1px solid; border-color: #777 #222 #222 #777; }
.sw { width: 27px; border: 1px solid rgba(0,0,0,.35); }
.ctl .tog { flex: 1; background: #6f97f4; border-color: #a9c2ff #334d90 #334d90 #a9c2ff; }
.tog::before { content: ""; width: 3px; height: 9px; background: #111; }
.hs { width: 70px; height: 18px; margin-left: 33px; justify-content: space-between; padding: 0 3px; font-size: 12px; color: #ccc; border: 2px solid; border-color: #888 #222 #999 #222; background: #444; }
.hs + .hs { width: 73px; margin-left: 10px; }
.eye { width: 22px; height: 14px; }
.groups { display: grid; grid-template-columns: 187px 1fr; gap: 6px 0; margin-top: 3px; }
.group { display: flex; gap: 2px; }
.strip-bar { width: 7px; height: 79px; background: linear-gradient(90deg, #6f9af4 50%, #37508c); border-top: 2px solid #b9ceff; }
.pull { height: 22px; display: flex; align-items: center; justify-content: center; background: linear-gradient(#777, #777) center / 283px 1px no-repeat; border-top: 1px solid #222; }
.layers .pull { margin: 4px 0 0 -4px; border: 0; }
.last { height: 26px; border: 0; }

.projects { height: 148px; display: flex; background: #4e4e4e; border-top: 2px solid #222; }
.plist { width: 121px; border-right: 2px solid #111; }
.plist-body { height: 118px; display: flex; border-bottom: 1px solid #2a2a2a; }
.plist-items { flex: 1; padding-top: 3px; font-size: 11px; }
.plist-items a { display: block; height: 17px; line-height: 16px; padding-left: 5px; background: #4a69ad; color: #ddd; }
.vbar { width: 14px; height: 118px; margin-right: 5px; }
.plist-foot { display: flex; gap: 2px; padding: 7px 2px; }
.b { width: 30px; height: 20px; background: #505050; border: 2px solid; border-color: #888 #222 #222 #888; color: #e8e8dc; font-size: 17px; font-weight: bold; line-height: 14px; }
.mngr { width: 52px; font-size: 11px; }
.thumbs { flex: 1; min-width: 0; background: #555; overflow: hidden; }
.strip { display: flex; gap: 4px; padding: 6px 0 0 4px; }
.card { flex: none; width: 96px; border: 1px solid #777; }
.pic { height: 91px; background: #000; position: relative; }
.pic b { position: absolute; left: 5px; top: 0; font: bold 13px/18px "DejaVu Sans", sans-serif; color: #fff; z-index: 1; }
.pic button { position: absolute; right: 0; top: 0; width: 20px; height: 15px; background: #333; border: 1px solid #777; }
.art { width: 100%; height: 90px; }
.acts { display: flex; }
.acts button { flex: 1; height: 20px; background: #3a3a3a; border: 1px solid; border-color: #888 #222 #222 #888; }
.hbar { display: flex; align-items: center; padding: 5px 3px 0 3px; }
.hbar i { width: 13px; height: 13px; background: #555; border: 2px solid; border-color: #888 #222 #222 #888; }
.hbar span { flex: 1; height: 4px; background: #999; border: 1px solid #333; margin-right: 5px; }
.hbar .b { width: 18px; height: 18px; border-width: 1px; font-size: 14px; font-weight: normal; }

.rail { height: 32px; display: flex; align-items: center; background: linear-gradient(#c8c6be, #a8a69b 70%, #c0beb4); }
.rail-ic { width: 31px; height: 32px; background: #555; display: flex; align-items: center; }
.rail-name { width: 76px; margin: 0 14px 0 7px; font-size: 13px; line-height: 16px; color: #111; display: flex; flex-direction: column; }
.rail-name .second { text-align: right; }
.usa { width: 75px; height: 21px; border: 2px solid; border-color: #111 #aaa #aaa #111; background: #30302e; color: #ddd; font: 14px "Liberation Sans", sans-serif; padding: 0 2px; }
.size { appearance: none; width: 86px; height: 26px; margin: 0 6px 0 5px; padding: 0 3px; border: 2px solid; border-color: #888 #eee #eee #888; border-radius: 0; font: 15px "Liberation Sans", sans-serif; color: #222; background: url("data:image/svg+xml,%3Csvg xmlns='http://www.w3.org/2000/svg' width='20' height='22'%3E%3Cpath d='M0 0h20v22H0z' fill='%23f2f2f2'/%3E%3Cpath d='M6 9h9l-4.500 5z'/%3E%3C/svg%3E") right center no-repeat #b9b9b9; }
.go { width: 22px; height: 20px; background: #2f9d12; border: 1px solid #1b5a0a; margin-right: 30px; }
.rail-x { width: 18px; height: 18px; }

.frame { flex: 1; min-width: 0; display: flex; flex-direction: column; background: #d8dfe1; border: 9px solid #b4b4b4; border-width: 9px 11px 10px 10px; outline: 1px solid #f0f0f0; outline-offset: -2px; }
.cmd { display: flex; height: 31px; padding: 4px 1px 4px 2px; }
.grip { width: 4px; border-left: 1px solid #777; border-right: 1px solid #777; height: 25px; }
.cmd-line { flex: 1; height: 24px; background: #82b48b; display: flex; align-items: center; margin: 0 2px; font: bold 16px "Liberation Sans", sans-serif; color: #16301c; }
.cmd-line span { line-height: 20px; padding: 0 2px 3px 0; }
.cmd-line input { flex: 1; border: 0; background: none; height: 20px; }
.spin { width: 16px; display: flex; flex-direction: column; gap: 3px; }
.spin button { height: 10px; background: #fafafa; border-bottom: 1px solid #999; }
.tri { width: 7px; height: 5px; }
.big { width: 9px; height: 6px; }
.tabs { display: flex; height: 31px; align-items: flex-end; border-bottom: 2px solid #f4f4f4; }
.tab { height: 25px; padding: 0 8px 3px 14px; background: linear-gradient(135deg, #d8dfe1 7px, #55686a 7px 9px, #d3e3e6 9px); border: solid #55686a; border-width: 2px 2px 0 0; border-radius: 0 6px 0 0; font-size: 14px; color: #1a1e40; clip-path: polygon(0 45%, 10px 0, 100% 0, 100% 100%, 0 100%); }
.tab.cur { background: linear-gradient(135deg, #d8dfe1 5px, #41654a 5px 7px, #82b48b 7px); color: #122a18; }
.tab.add { padding: 0 9px 0 15px; background: linear-gradient(135deg, #d8dfe1 7px, #55686a 7px 9px, #d8dfe1 9px); }
.view { flex: 1; min-height: 0; position: relative; background: #000; overflow: hidden; }
.scene { position: absolute; inset: 0; width: 100%; height: 100%; }
.chain path { fill: none; stroke: #008254; stroke-linejoin: round; }
.chain .w1 { stroke-width: 16px; }
.chain .w2 { stroke-width: 18px; stroke-linecap: round; stroke-dasharray: 0 13.400; }
.chain .w3 { stroke: #000; stroke-width: 7px; stroke-dasharray: 2 11.400; stroke-dashoffset: -6; }
.tag { position: absolute; left: 0; top: 0; display: flex; height: 22px; background: #82b48b; border-radius: 0 0 4px 0; font-size: 14px; color: #122a18; }
.tag button { padding: 0 10px; }
.tag .dd { padding: 0 2px; border-left: 1px solid #1b3520; }
.activate { position: absolute; right: 70px; bottom: 36px; width: 285px; color: #838383; white-space: nowrap; }
.a1 { font-size: 24px; line-height: 34px; }
.a2 { font-size: 17px; line-height: 26px; }

.bar { height: 60px; padding-bottom: 1px; background: #d9d9d9; display: grid; grid-template-columns: 1fr auto 1fr; align-items: center; color: #1c1c1c; border-top: 1px solid #999; }
.weather { display: flex; gap: 7px; padding: 0 0 2px 24px; align-items: center; font-size: 14px; line-height: 20px; }
.wic { width: 34px; height: 38px; }
.badge { font: bold 13px "Open Sans", sans-serif; fill: #fff; }
.dim { color: #5e5e5e; }
.apps { display: flex; align-items: center; padding-left: 8px; }
.search { width: 274px; height: 39px; margin: 0 5px 0 16px; border-radius: 20px; background: #f3f3f3; border: 1px solid #c6c6c6; display: flex; align-items: center; gap: 11px; padding-left: 13px; }
.search input { width: 180px; border: 0; background: none; font: 16px "Open Sans", sans-serif; padding: 0; }
.search input::placeholder { color: #5c5c5c; opacity: 1; }
.app { width: 48px; height: 48px; margin-right: 7px; border-radius: 4px; position: relative; }
.app:last-child { margin-right: 0; }
.active { background: #f0f0f0; border: 1px solid #e8e8e8; }
.active::after, .run::after { content: ""; position: absolute; bottom: 0; width: 7px; height: 4px; border-radius: 2px; background: #808080; }
.active::after { width: 20px; background: #22808f; }
.tray { display: flex; align-items: center; justify-content: flex-end; padding: 0 24px 1px 0; font-size: 14px; }
.tray button { margin-right: 20px; }
.tray .lang { margin: 0 23px 0 4px; }
.tray .quick { gap: 10px; margin-right: 21px; }
.clock { min-width: 77px; text-align: right; line-height: 20px; }
```
